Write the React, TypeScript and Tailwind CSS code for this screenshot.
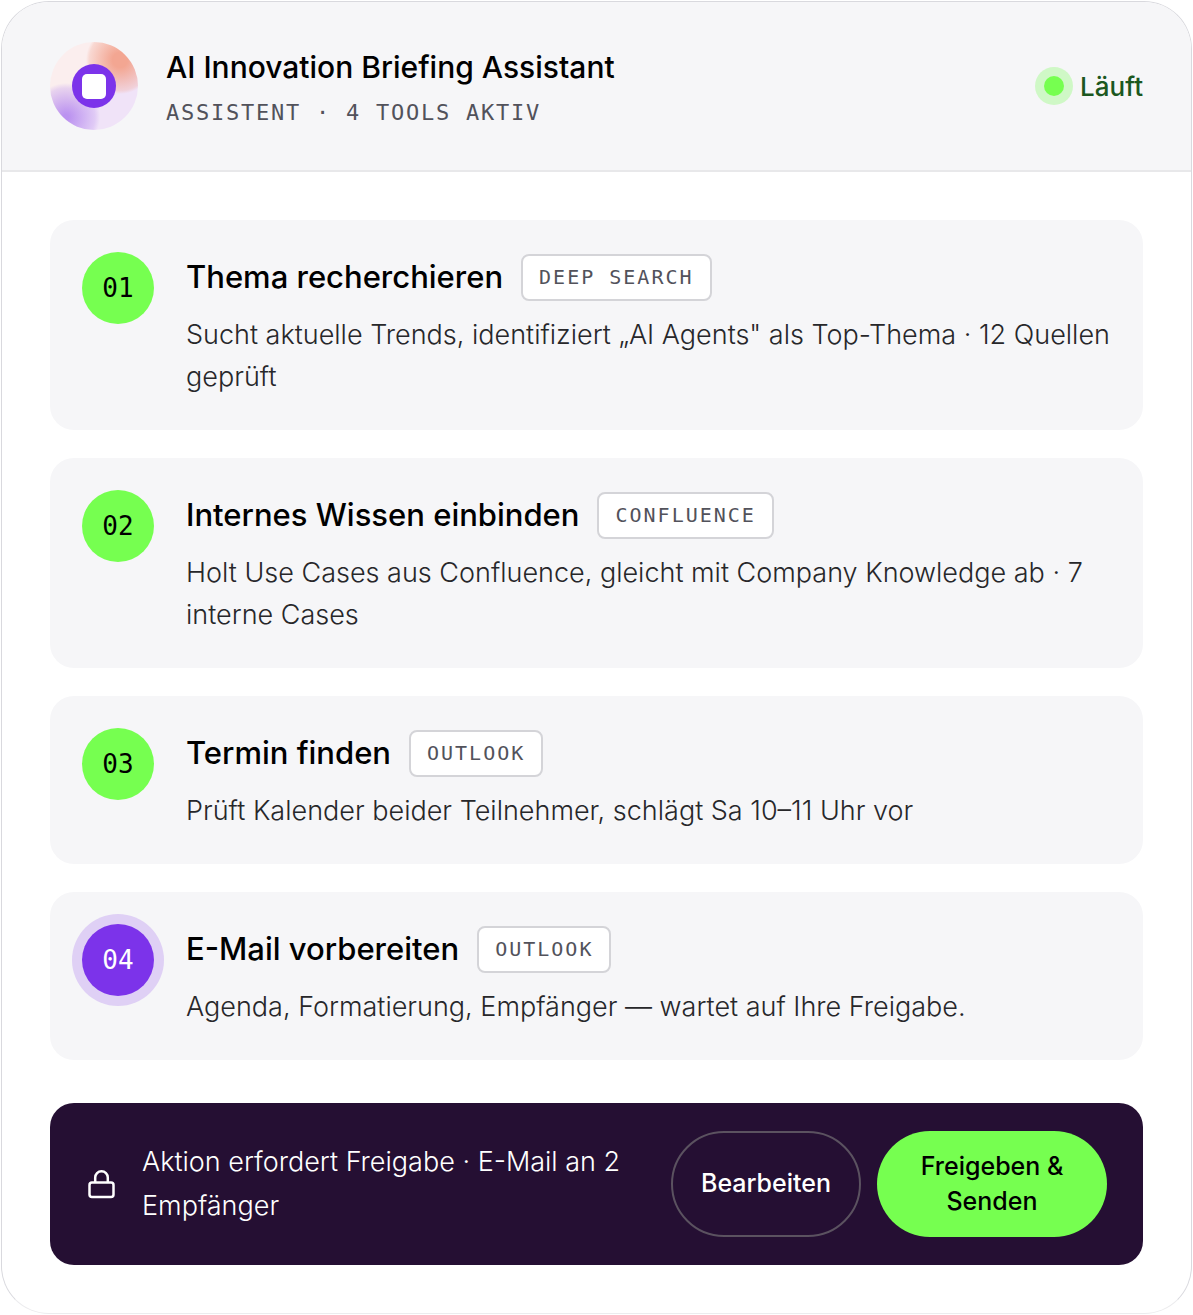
import React from "react";

type Step = { no: string; title: string; tool: string; text: string; active?: boolean };

const steps: Step[] = [
  { no: "01", title: "Thema recherchieren", tool: "DEEP SEARCH", text: "Sucht aktuelle Trends, identifiziert „AI Agents\" als Top-Thema · 12 Quellen geprüft" },
  { no: "02", title: "Internes Wissen einbinden", tool: "CONFLUENCE", text: "Holt Use Cases aus Confluence, gleicht mit Company Knowledge ab · 7 interne Cases" },
  { no: "03", title: "Termin finden", tool: "OUTLOOK", text: "Prüft Kalender beider Teilnehmer, schlägt Sa 10–11 Uhr vor" },
  { no: "04", title: "E-Mail vorbereiten", tool: "OUTLOOK", text: "Agenda, Formatierung, Empfänger — wartet auf Ihre Freigabe.", active: true },
];

function StepCard({ step }: { step: Step }) {
  return (
    <li className="flex gap-8 rounded-3xl bg-[#f6f6f8] p-8">
      <span
        className={
          step.active
            ? "flex size-[72px] shrink-0 items-center justify-center rounded-full bg-[#7c33ea] font-['DejaVu_Sans_Mono',monospace] text-[26px] text-white ring-[10px] ring-[#dfd0f5]"
            : "flex size-[72px] shrink-0 items-center justify-center rounded-full bg-[#76ff50] font-['DejaVu_Sans_Mono',monospace] text-[26px] text-black"
        }
      >
        {step.no}
      </span>
      <div className="min-w-0 flex-1">
        <div className="flex flex-wrap items-center gap-[18px]">
          <h2 className="text-[31px] leading-[50px] font-medium">{step.title}</h2>
          <span className="rounded-lg border-2 border-[#d4d4d8] bg-white px-4 font-['DejaVu_Sans_Mono',monospace] text-[20px] leading-[43px] tracking-[2px] text-[#52525b]">
            {step.tool}
          </span>
        </div>
        <p className="mt-3 text-[27px] leading-[42px] font-light text-[#27272a]">{step.text}</p>
      </div>
    </li>
  );
}

function Avatar() {
  return (
    <svg viewBox="0 0 88 88" className="size-22 shrink-0" aria-hidden="true">
      <defs>
        <linearGradient id="base" x1="0" y1="0" x2="1" y2="1">
          <stop offset="0.45" stopColor="#fbeeee" />
          <stop offset="0.6" stopColor="#f0e3f8" />
        </linearGradient>
        <radialGradient id="coral" gradientUnits="userSpaceOnUse" cx="70" cy="18" r="34">
          <stop offset="0.22" stopColor="#f3a692" />
          <stop offset="0.9" stopColor="#f3a692" stopOpacity="0.3" />
          <stop offset="1" stopColor="#f3a692" stopOpacity="0" />
        </radialGradient>
        <radialGradient id="violet" gradientUnits="userSpaceOnUse" cx="16" cy="75" r="34">
          <stop offset="0.08" stopColor="#bb92f0" />
          <stop offset="0.85" stopColor="#bb92f0" stopOpacity="0.3" />
          <stop offset="1" stopColor="#bb92f0" stopOpacity="0" />
        </radialGradient>
      </defs>
      <circle cx="44" cy="44" r="44" fill="url(#base)" />
      <circle cx="44" cy="44" r="44" fill="url(#coral)" />
      <circle cx="44" cy="44" r="44" fill="url(#violet)" />
      <circle cx="44" cy="44" r="22" fill="#7c33ea" />
      <rect x="32" y="32" width="24" height="25" rx="5" fill="#fff" />
    </svg>
  );
}

function LockIcon() {
  return (
    <svg viewBox="0 0 32 32" className="size-8 shrink-0" fill="none" stroke="currentColor" strokeWidth="2.5" aria-hidden="true">
      <rect x="3.5" y="14.5" width="24" height="14.5" rx="2.5" />
      <path d="M9.2 14.5V9.6a6.3 6.3 0 0 1 12.6 0v4.9" />
    </svg>
  );
}

export default function App() {
  return (
    <div className="bg-white p-px font-['Inter',sans-serif] text-black">
      <main className="overflow-hidden rounded-[48px] border border-[#d9d9de] border-b-[#ececee]">
        <header className="flex items-center gap-7 border-b-2 border-[#e8e8ea] bg-[#f6f6f8] px-12 py-10">
          <Avatar />
          <div className="flex-1">
            <h1 className="text-[30px] leading-[50px] font-medium">AI Innovation Briefing Assistant</h1>
            <p className="mt-1 font-['DejaVu_Sans_Mono',monospace] text-[22px] leading-[34px] tracking-[0.08em] text-[#52525b]">
              ASSISTENT · 4 TOOLS AKTIV
            </p>
          </div>
          <p className="flex items-center gap-4 text-[26px] font-medium text-[#1b5720]">
            <span className="size-5 rounded-full bg-[#76ff50] ring-[9px] ring-[#cff8c6]" />
            Läuft
          </p>
        </header>
        <div className="p-12">
          <ol className="flex flex-col gap-7">
            {steps.map((step) => (
              <StepCard key={step.no} step={step} />
            ))}
          </ol>
          <section className="mt-[43px] flex items-center gap-4 rounded-3xl bg-[#250f33] px-9 py-7 text-white">
            <div className="flex min-w-0 flex-1 items-center gap-6">
              <LockIcon />
              <p className="text-[27px] leading-[44px] font-light">Aktion erfordert Freigabe · E-Mail an 2 Empfänger</p>
            </div>
            <button type="button" className="self-stretch rounded-full border-2 border-[#5b5260] px-7 text-[25px] font-medium">
              Bearbeiten
            </button>
            <button type="button" className="w-[230px] rounded-full bg-[#76ff50] px-7 py-[18px] text-[25px] leading-[35px] font-medium text-black">
              Freigeben &amp; Senden
            </button>
          </section>
        </div>
      </main>
    </div>
  );
}
